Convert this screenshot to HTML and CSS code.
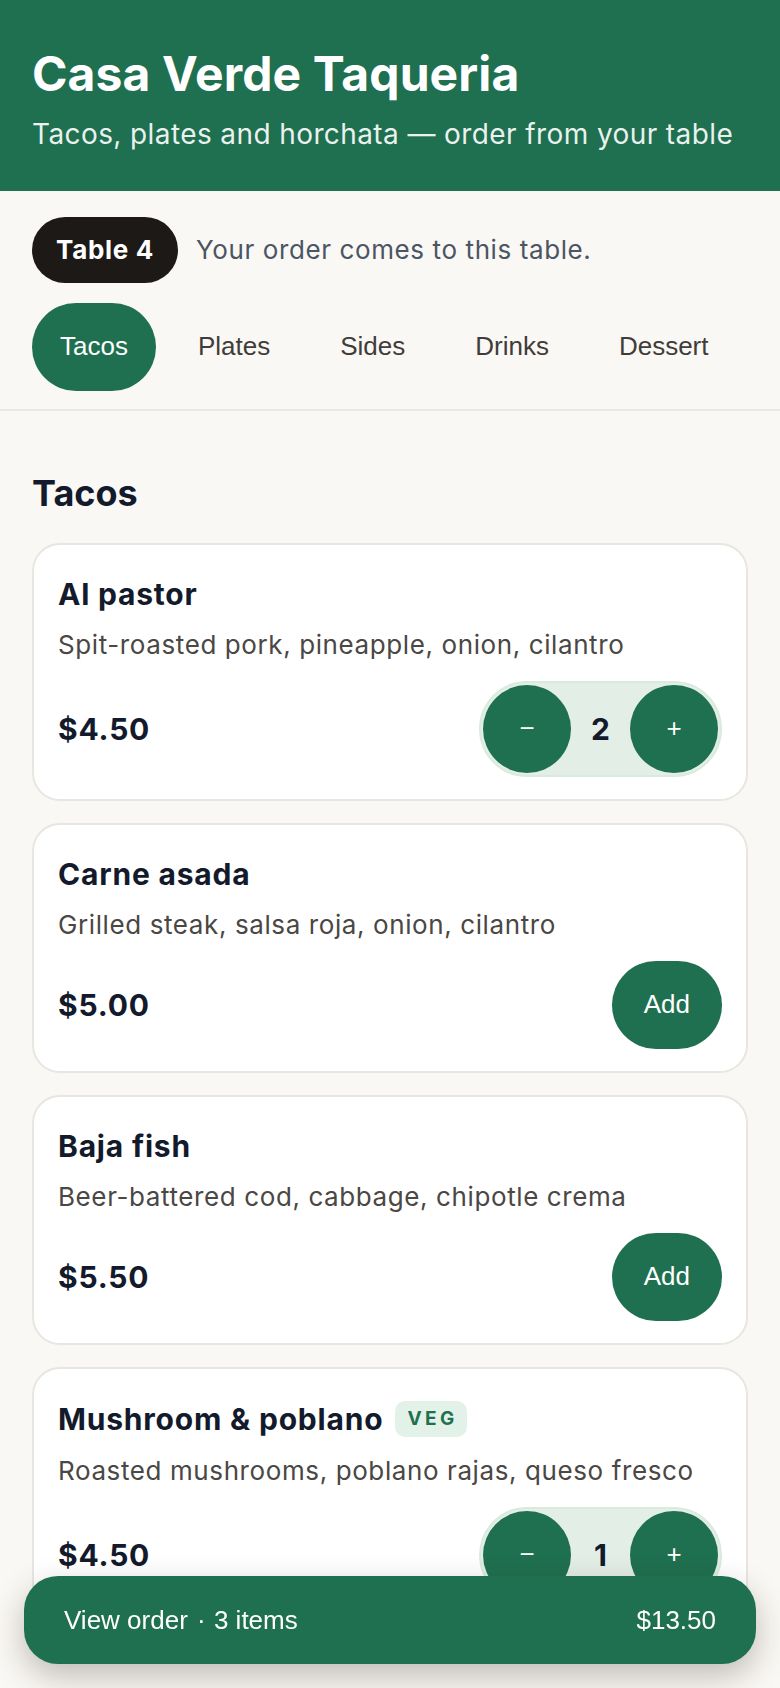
FILE: index.html
```html
<!DOCTYPE html>
<html lang="en">
<head>
<meta charset="utf-8">
<title>Casa Verde Taqueria</title>
<link rel="stylesheet" href="styles.css">
</head>
<body>
<header class="hero">
  <h1 class="hero-title">Casa Verde Taqueria</h1>
  <p class="hero-sub">Tacos, plates and horchata — order from your table</p>
</header>

<div class="toolbar">
  <div class="table-row">
    <span class="table-pill">Table 4</span>
    <span class="table-note">Your order comes to this table.</span>
  </div>
  <nav class="tabs">
    <button class="tab is-active">Tacos</button>
    <button class="tab">Plates</button>
    <button class="tab">Sides</button>
    <button class="tab">Drinks</button>
    <button class="tab">Dessert</button>
  </nav>
</div>

<main class="menu">
  <h2 class="section-title">Tacos</h2>

  <article class="card">
    <div class="name-row"><h3 class="item-name">Al pastor</h3></div>
    <p class="item-desc">Spit-roasted pork, pineapple, onion, cilantro</p>
    <div class="card-foot">
      <span class="price">$4.50</span>
      <div class="stepper">
        <button class="step-btn">−</button>
        <span class="qty">2</span>
        <button class="step-btn">+</button>
      </div>
    </div>
  </article>

  <article class="card">
    <div class="name-row"><h3 class="item-name">Carne asada</h3></div>
    <p class="item-desc">Grilled steak, salsa roja, onion, cilantro</p>
    <div class="card-foot">
      <span class="price">$5.00</span>
      <button class="add-btn">Add</button>
    </div>
  </article>

  <article class="card">
    <div class="name-row"><h3 class="item-name">Baja fish</h3></div>
    <p class="item-desc">Beer-battered cod, cabbage, chipotle crema</p>
    <div class="card-foot">
      <span class="price">$5.50</span>
      <button class="add-btn">Add</button>
    </div>
  </article>

  <article class="card">
    <div class="name-row"><h3 class="item-name">Mushroom &amp; poblano</h3><span class="badge">VEG</span></div>
    <p class="item-desc">Roasted mushrooms, poblano rajas, queso fresco</p>
    <div class="card-foot">
      <span class="price">$4.50</span>
      <div class="stepper">
        <button class="step-btn">−</button>
        <span class="qty">1</span>
        <button class="step-btn">+</button>
      </div>
    </div>
  </article>
</main>

<button class="order-bar">
  <span>View order <span class="sep">·</span> 3 items</span>
  <span>$13.50</span>
</button>
</body>
</html>
```

FILE: styles.css
```css
* { box-sizing: border-box; }

html, body {
  margin: 0;
  padding: 0;
}

body {
  background: #faf8f4;
  font-family: Inter, "Noto Sans", sans-serif;
  color: #131a2b;
}

.hero {
  background: #1f7050;
  color: #ffffff;
  padding: 45px 32px 37px;
}

.hero-title {
  margin: 0;
  font-size: 48px;
  line-height: 1.2;
  font-weight: 700;
  letter-spacing: 0.1px;
}

.hero-sub {
  margin: 12px 0 0;
  font-size: 28px;
  line-height: 1.4;
  letter-spacing: 0.4px;
  color: rgba(255, 255, 255, 0.92);
}

.toolbar {
  background: #faf8f4;
  padding: 26px 32px 18px;
  border-bottom: 2px solid #ebe8e3;
}

.table-row {
  display: flex;
  align-items: center;
  gap: 18px;
}

.table-pill {
  background: #1c1917;
  color: #ffffff;
  font-weight: 700;
  font-size: 26px;
  line-height: 34px;
  letter-spacing: 0.7px;
  padding: 16px 24px;
  border-radius: 999px;
}

.table-note {
  font-size: 26px;
  letter-spacing: 0.6px;
  color: #4b5563;
}

.tabs {
  display: flex;
  gap: 14px;
  margin-top: 20px;
}

.tab {
  font-family: "Liberation Sans", Arial, sans-serif;
  font-size: 26px;
  height: 88px;
  padding: 0 28px;
  border: none;
  border-radius: 999px;
  background: transparent;
  color: #3f3c39;
}

.tab.is-active {
  background: #1f7050;
  color: #ffffff;
}

.menu {
  padding: 59px 32px 160px;
}

.section-title {
  margin: 0 0 27px;
  font-size: 36px;
  line-height: 46px;
  font-weight: 700;
}

.card {
  background: #ffffff;
  border: 2px solid #e9e6e1;
  border-radius: 28px;
  padding: 32px 24px 22px;
  margin-bottom: 22px;
}

.name-row {
  display: flex;
  align-items: center;
  gap: 12px;
}

.item-name {
  margin: 0;
  font-size: 30px;
  line-height: 34px;
  font-weight: 700;
  letter-spacing: 0.8px;
}

.badge {
  background: #e3f2e8;
  color: #1f7050;
  font-size: 19px;
  font-weight: 700;
  letter-spacing: 3.5px;
  line-height: 36px;
  padding: 0 9px 0 12px;
  border-radius: 10px;
}

.item-desc {
  margin: 14px 0 0;
  font-size: 26px;
  line-height: 40px;
  letter-spacing: 0.6px;
  color: #4a4744;
}

.card-foot {
  display: flex;
  justify-content: space-between;
  align-items: center;
  margin-top: 16px;
}

.price {
  font-size: 30px;
  font-weight: 700;
  letter-spacing: 0.8px;
}

.stepper {
  display: flex;
  align-items: center;
  background: #e3eee7;
  border: 2px solid #d9ebdf;
  border-radius: 999px;
  padding: 2px;
}

.step-btn {
  width: 88px;
  height: 88px;
  border: none;
  border-radius: 50%;
  background: #1f7050;
  color: #ffffff;
  font-family: "Liberation Sans", Arial, sans-serif;
  font-size: 26px;
  padding: 0;
}

.qty {
  width: 59px;
  text-align: center;
  font-size: 30px;
  font-weight: 700;
}

.add-btn {
  height: 88px;
  padding: 0 32px;
  border: none;
  border-radius: 999px;
  background: #1f7050;
  color: #ffffff;
  font-family: "Liberation Sans", Arial, sans-serif;
  font-size: 26px;
}

.order-bar {
  position: fixed;
  left: 24px;
  right: 24px;
  bottom: 24px;
  height: 88px;
  display: flex;
  justify-content: space-between;
  align-items: center;
  padding: 0 40px;
  border: none;
  border-radius: 34px;
  background: #1f7050;
  color: #ffffff;
  font-family: "Liberation Sans", Arial, sans-serif;
  font-size: 26px;
  box-shadow: 0 12px 32px rgba(40, 30, 20, 0.28);
}

.sep {
  margin: 0 1px 0 2px;
}
```
